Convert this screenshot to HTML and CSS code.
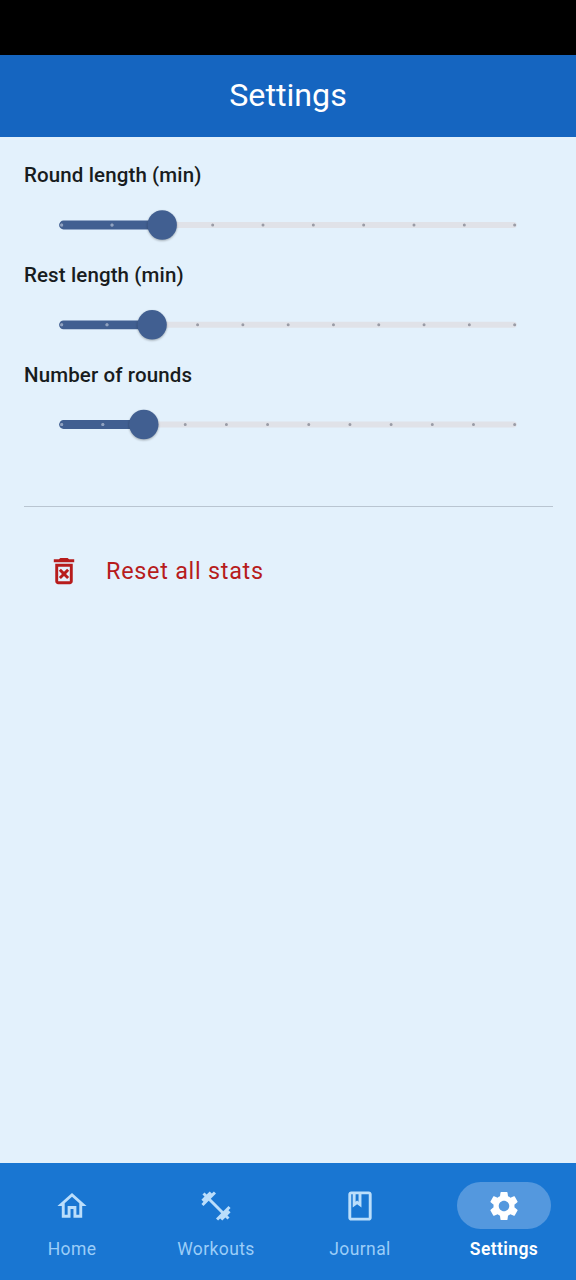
FILE: index.html
```html
<!DOCTYPE html>
<html lang="en">
<head>
<meta charset="utf-8">
<title>Settings</title>
<link rel="stylesheet" href="styles.css">
</head>
<body>
<div class="screen">
  <div class="status-bar"></div>
  <header class="app-bar"><h1 class="app-title">Settings</h1></header>
  <main class="content">
    <section class="setting">
      <h2 class="setting-label">Round length (min)</h2>
      <svg class="slider" viewBox="0 0 529 60">
        <path class="track" d="M138 30H489.8"/>
        <path class="track-active" d="M39.5 30H138"/>
        <path class="ticks" pathLength="9.001" d="M37.7 30H490.7"/>
        <path class="ticks-active" pathLength="2" d="M37.7 30H138.3"/>
        <circle class="thumb" cx="138.2" cy="30" r="14.7"/>
      </svg>
    </section>
    <section class="setting">
      <h2 class="setting-label">Rest length (min)</h2>
      <svg class="slider" viewBox="0 0 529 60">
        <path class="track" d="M128 29.8H489.8"/>
        <path class="track-active" d="M39.5 29.8H128"/>
        <path class="ticks" pathLength="10.001" d="M37.7 29.8H490.7"/>
        <path class="ticks-active" pathLength="2" d="M37.7 29.8H128.3"/>
        <circle class="thumb" cx="128.1" cy="29.8" r="14.7"/>
      </svg>
    </section>
    <section class="setting">
      <h2 class="setting-label">Number of rounds</h2>
      <svg class="slider" viewBox="0 0 529 60">
        <path class="track" d="M120 29.5H489.8"/>
        <path class="track-active" d="M39.5 29.5H120"/>
        <path class="ticks" pathLength="11.001" d="M37.7 29.5H490.7"/>
        <path class="ticks-active" pathLength="2" d="M37.7 29.5H120"/>
        <circle class="thumb" cx="119.8" cy="29.5" r="14.7"/>
      </svg>
    </section>
    <hr class="divider">
    <div class="reset">
      <svg class="icon" viewBox="0 0 24 24"><path d="M14.12 10.47L12 12.59l-2.13-2.12-1.41 1.41L10.59 14l-2.12 2.12 1.41 1.41L12 15.41l2.12 2.12 1.41-1.41L13.41 14l2.12-2.12zM15.5 4l-1-1h-5l-1 1H5v2h14V4zM6 19c0 1.1.9 2 2 2h8c1.1 0 2-.9 2-2V7H6v12zM8 9h8v10H8V9z"/></svg>
      <span class="reset-label">Reset all stats</span>
    </div>
  </main>
  <nav class="nav">
    <div class="nav-item">
      <div class="pill"><svg class="icon" viewBox="0 0 24 24"><path d="M12 5.69l5 4.5V18h-2v-6H9v6H7v-7.81l5-4.5M12 3L2 12h3v8h6v-6h2v6h6v-8h3L12 3z"/></svg></div>
      <span class="nav-label">Home</span>
    </div>
    <div class="nav-item">
      <div class="pill"><svg class="icon" viewBox="0 0 24 24"><path d="M20.57 14.86L22 13.43 20.57 12 17 15.57 8.43 7 12 3.43 10.57 2 9.14 3.43 7.71 2 5.57 4.14 4.14 2.71 2.71 4.14l1.43 1.43L2 7.71l1.43 1.43L2 10.57 3.43 12 7 8.43 15.57 17 12 20.57 13.43 22l1.43-1.43L16.29 22l2.14-2.14 1.43 1.43 1.43-1.43-1.43-1.43L22 16.29z"/></svg></div>
      <span class="nav-label">Workouts</span>
    </div>
    <div class="nav-item">
      <div class="pill"><svg class="icon" viewBox="0 0 24 24"><path d="M18 2H6c-1.1 0-2 .9-2 2v16c0 1.1.9 2 2 2h12c1.1 0 2-.9 2-2V4c0-1.1-.9-2-2-2zM9 4h2v5l-1-.75L9 9V4zm9 16H6V4h1v9l3-2.25L13 13V4h5v16z"/></svg></div>
      <span class="nav-label">Journal</span>
    </div>
    <div class="nav-item selected">
      <div class="pill"><svg class="icon" viewBox="0 0 24 24"><path d="M19.14 12.94c.04-.3.06-.61.06-.94 0-.32-.02-.64-.07-.94l2.03-1.58c.18-.14.23-.41.12-.61l-1.92-3.32c-.12-.22-.37-.29-.59-.22l-2.39.96c-.5-.38-1.03-.7-1.62-.94l-.36-2.54c-.04-.24-.24-.41-.48-.41h-3.84c-.24 0-.43.17-.47.41l-.36 2.54c-.59.24-1.13.57-1.62.94l-2.39-.96c-.22-.08-.47 0-.59.22L2.74 8.87c-.12.21-.08.47.12.61l2.03 1.58c-.05.3-.09.63-.09.94s.02.64.07.94l-2.03 1.58c-.18.14-.23.41-.12.61l1.92 3.32c.12.22.37.29.59.22l2.39-.96c.5.38 1.03.7 1.62.94l.36 2.54c.05.24.24.41.48.41h3.84c.24 0 .44-.17.47-.41l.36-2.54c.59-.24 1.13-.56 1.62-.94l2.39.96c.22.08.47 0 .59-.22l1.92-3.32c.12-.22.07-.47-.12-.61l-2.01-1.58zM12 15.6c-1.98 0-3.6-1.62-3.6-3.6s1.62-3.6 3.6-3.6 3.6 1.62 3.6 3.6-1.62 3.6-3.6 3.6z"/></svg></div>
      <span class="nav-label">Settings</span>
    </div>
  </nav>
</div>
</body>
</html>
```

FILE: styles.css
```css
* {
  box-sizing: border-box;
}

body {
  margin: 0;
  font-family: Roboto, "Liberation Sans", sans-serif;
}

.screen {
  display: flex;
  flex-direction: column;
  height: 1280px;
  background: #e3f1fc;
}

.status-bar {
  height: 55px;
  background: #000;
}

.app-bar {
  display: flex;
  align-items: center;
  justify-content: center;
  height: 82px;
  padding-bottom: 2px;
  background: #1565c0;
}

.app-title {
  margin: 0;
  font-size: 32.2px;
  font-weight: 400;
  line-height: 40px;
  color: #fff;
}

.content {
  flex: 1;
  padding: 23.3px 23px 0 24px;
}

.setting {
  height: 99.8px;
}

.setting-label {
  margin: 0;
  font-size: 20.5px;
  font-weight: 500;
  line-height: 30px;
  letter-spacing: 0.12px;
  color: #181c20;
}

.slider {
  display: block;
  width: 529px;
  height: 60px;
  margin-top: 5px;
}

.track,
.track-active,
.ticks,
.ticks-active {
  fill: none;
  stroke-linecap: round;
}

.track {
  stroke: #e0e2e8;
  stroke-width: 5.9;
}

.track-active {
  stroke: #415f91;
  stroke-width: 8.8;
}

.ticks,
.ticks-active {
  stroke-width: 3;
  stroke-dasharray: 0 1;
}

.ticks {
  stroke: #9a9ca6;
}

.ticks-active {
  stroke: #8fa3c4;
}

.thumb {
  fill: #415f91;
  filter: drop-shadow(0 1.5px 1.2px rgba(0, 0, 0, 0.3));
}

.divider {
  height: 1.4px;
  margin: 46px 0 0;
  border: 0;
  background: #b9c5d1;
}

.reset {
  display: flex;
  align-items: center;
  gap: 24px;
  margin-top: 46px;
  padding-left: 22px;
  color: #b71c1c;
}

.icon {
  display: block;
  width: 36px;
  height: 36px;
  padding: 0.5px;
  fill: currentColor;
}

.reset-label {
  font-size: 23.4px;
  line-height: 34px;
  letter-spacing: 0.73px;
}

.nav {
  display: flex;
  height: 117px;
  background: #1976d2;
}

.nav-item {
  display: flex;
  flex: 1;
  flex-direction: column;
  align-items: center;
  padding-top: 19px;
  color: #bbdefb;
}

.pill {
  display: flex;
  align-items: center;
  justify-content: center;
  width: 94px;
  height: 47px;
  border-radius: 24px;
}

.nav-label {
  margin-top: 7.5px;
  font-size: 17.5px;
  line-height: 25px;
  letter-spacing: 0.4px;
  color: #9bcdf8;
}

.selected {
  color: #fff;
}

.selected .pill {
  background: #5498de;
}

.selected .nav-label {
  font-weight: 600;
  color: #fff;
}
```
